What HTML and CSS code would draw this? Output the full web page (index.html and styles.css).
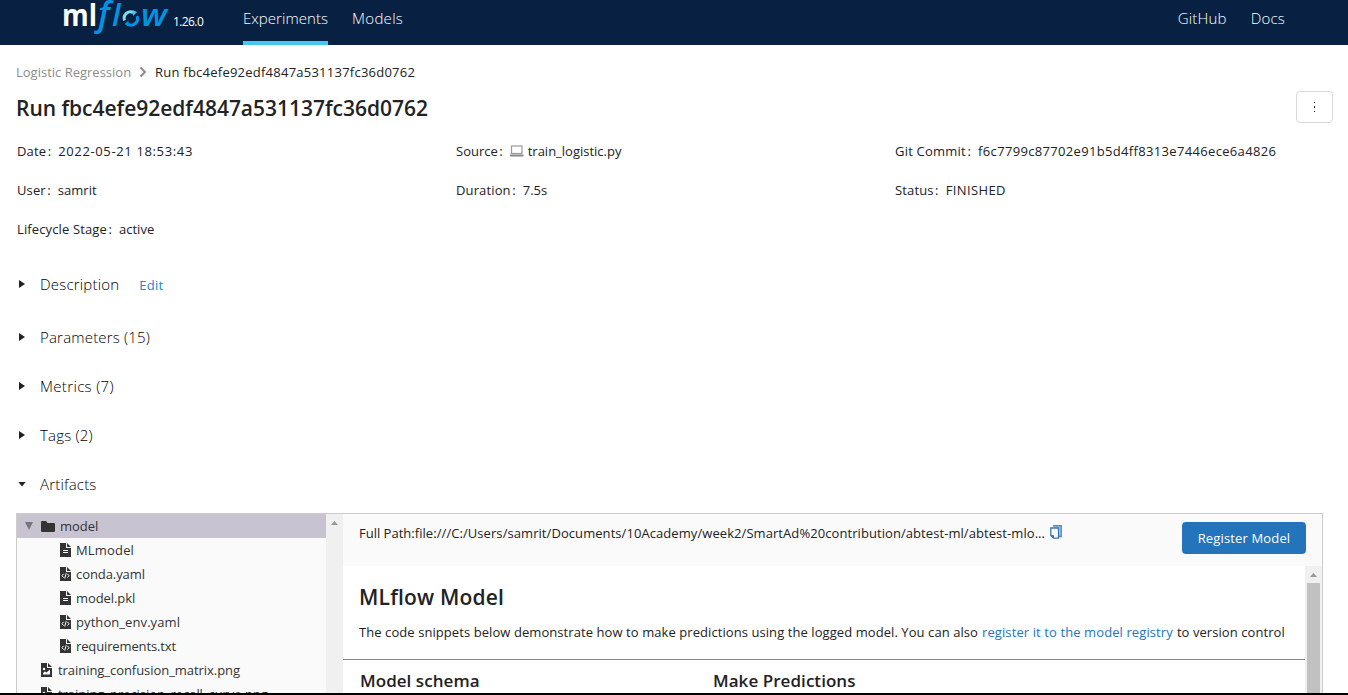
FILE: index.html
```
<!DOCTYPE html>
<html lang="en">
<head>
<meta charset="utf-8">
<title>MLflow</title>
<link rel="stylesheet" href="styles.css">
</head>
<body>
<svg class="sprite" aria-hidden="true">
  <symbol id="doc" viewBox="0 0 11 14"><path d="M0 0H6V5H11V14H0Z M7 0L11 4H7Z" fill="#333"/><path d="M3 7.500H8M3 9.500H8" stroke="#fafafa" stroke-width="1"/></symbol>
  <symbol id="code" viewBox="0 0 11 14"><path d="M0 0H6V5H11V14H0Z M7 0L11 4H7Z" fill="#333"/><path d="M3.500 6.800L2 8.700L3.500 10.500M7.500 6.800L9 8.700L7.500 10.500M6.200 6.200L4.700 11.500" stroke="#fafafa" stroke-width="1" fill="none"/></symbol>
  <symbol id="image" viewBox="0 0 11 14"><path d="M0 0H6V5H11V14H0Z M7 0L11 4H7Z" fill="#333"/><path d="M2 11.500V10L4 8.500L5.500 9.500L9 6.500V11.500Z" fill="#fafafa"/><circle cx="3" cy="6" r="1.200" fill="#fafafa"/></symbol>
</svg>
<header class="navbar">
  <svg class="logo" width="106" height="45" viewBox="0 0 106 45">
    <text class="logo-ml" x="-1" y="26" textLength="35" lengthAdjust="spacingAndGlyphs">ml</text>
    <text class="logo-flow logo-f" x="35" y="26">f</text>
    <text class="logo-flow" x="49" y="26">l</text>
    <g fill="none" stroke-width="3"><path d="M61.500 20.500A6.500 6.500 0 0 1 70.500 12.500" stroke="#7fdcf0"/><path d="M74 16A6.500 6.500 0 0 1 64.500 24" stroke="#0194e2"/></g>
    <path d="M69.500 10L74 12L70 16Z" fill="#43c9ed"/><path d="M65.500 20.500V26.500L61.500 24Z" fill="#0194e2"/>
    <text class="logo-flow" x="78" y="26" textLength="26" lengthAdjust="spacingAndGlyphs">w</text>
  </svg>
  <span class="version">1.26.0</span>
  <nav class="links">
    <a class="active">Experiments</a>
    <a class="models">Models</a>
  </nav>
  <nav class="links right"><a>GitHub</a><a>Docs</a></nav>
</header>
<main>
  <div class="crumbs"><span class="crumb-link">Logistic Regression</span><svg width="8" height="12" viewBox="0 0 8 12"><path d="M1.500 1.500L6 6L1.500 10.500" fill="none" stroke="#8c8c8c" stroke-width="2"/></svg><span class="crumb-now">Run fbc4efe92edf4847a531137fc36d0762</span></div>
  <div class="title-row"><h1>Run fbc4efe92edf4847a531137fc36d0762</h1><button class="more" aria-label="More"><i></i><i></i><i></i></button></div>
  <div class="meta">
    <div><span class="k">Date<em>:</em></span><span class="date">2022-05-21 18:53:43</span></div>
    <div><span class="k source">Source<em>:</em></span><svg class="laptop" width="14" height="12" viewBox="0 0 14 12"><rect x="1.500" y="1" width="10.500" height="7.500" fill="#fff" stroke="#999" stroke-width="1.200"/><path d="M0 9.500H13.500V11.500H0Z" fill="#888"/></svg><span>train_logistic.py</span></div>
    <div><span class="k commit">Git Commit<em>:</em></span><span class="hash">f6c7799c87702e91b5d4ff8313e7446ece6a4826</span></div>
    <div><span class="k">User<em>:</em></span><span>samrit</span></div>
    <div><span class="k">Duration<em>:</em></span><span>7.5s</span></div>
    <div><span class="k">Status<em>:</em></span><span class="status">FINISHED</span></div>
    <div><span class="k">Lifecycle Stage<em>:</em></span><span>active</span></div>
  </div>
  <section class="fold description"><b class="caret"></b><span>Description</span><a class="edit">Edit</a></section>
  <section class="fold"><b class="caret"></b><span>Parameters (15)</span></section>
  <section class="fold metrics"><b class="caret"></b><span>Metrics (7)</span></section>
  <section class="fold"><b class="caret"></b><span>Tags (2)</span></section>
  <section class="fold"><b class="caret open"></b><span>Artifacts</span></section>
  <div class="artifacts">
    <div class="tree">
      <div class="row selected"><b class="toggle"></b><svg width="14" height="11" viewBox="0 0 14 11"><path d="M0 1Q0 0 1 0H5L6.500 2H13Q14 2 14 3V10Q14 11 13 11H1Q0 11 0 10Z" fill="#333"/></svg><span>model</span></div>
      <div class="row child"><svg width="11" height="14"><use href="#doc"/></svg><span class="mlmodel">MLmodel</span></div>
      <div class="row child"><svg width="11" height="14"><use href="#code"/></svg><span>conda.yaml</span></div>
      <div class="row child"><svg width="11" height="14"><use href="#doc"/></svg><span>model.pkl</span></div>
      <div class="row child"><svg width="11" height="14"><use href="#code"/></svg><span class="env">python_env.yaml</span></div>
      <div class="row child"><svg width="11" height="14"><use href="#code"/></svg><span class="reqs">requirements.txt</span></div>
      <div class="row file"><svg width="11" height="14"><use href="#image"/></svg><span>training_confusion_matrix.png</span></div>
      <div class="row file"><svg width="11" height="14"><use href="#image"/></svg><span>training_precision_recall_curve.png</span></div>
    </div>
    <div class="bar"><b class="up"></b></div>
    <div class="view">
      <div class="path-row"><div class="path"><span>Full Path:</span><span class="uri">file:///C:/Users/samrit/Documents/10Academy/week2/SmartAd%20contribution/abtest-ml/abtest-mlo...</span></div><svg class="copy" width="12" height="14" viewBox="0 0 12 14"><path d="M3 .8H11.200V11.500H9" fill="#a9c9e8" stroke="#4a90cc" stroke-width="1.400"/><path d="M.8 3H8.500V13.200H3.500L.8 10.500Z" fill="#fff" stroke="#3577ae" stroke-width="1.300"/><path d="M1 10.500H3.500V13" fill="#3577ae" stroke="#3577ae"/></svg><button class="register">Register Model</button></div>
      <div class="body">
        <div class="content">
          <h2>MLflow Model</h2>
          <p><span>The code snippets below demonstrate how to make predictions using the logged model. You can also</span><a>register it to the model registry</a><span>to version control</span></p>
          <div class="cols"><h3>Model schema</h3><h3>Make Predictions</h3></div>
        </div>
        <div class="bar"><b class="up"></b><i class="thumb"></i></div>
      </div>
    </div>
  </div>
</main>
<footer class="edge"></footer>
</body>
</html>
```
FILE: styles.css
```
* { box-sizing: border-box; }
body { margin: 0; height: 695px; overflow: hidden; display: flex; flex-direction: column; background: #fff; color: #222; font: 13px/20px "Open Sans", "Noto Sans", sans-serif; white-space: nowrap; }
.sprite { display: none; }
.navbar { height: 45px; flex: none; background: #082142; color: #fff; display: flex; align-items: flex-start; padding: 0 63px; }
.logo { flex: none; }
.logo-ml { font: 700 31px "Open Sans", sans-serif; fill: #fff; }
.logo-flow { font: italic 600 31px "Open Sans", sans-serif; fill: #0194e2; }
.logo-f { font-size: 34px; }
.version { margin: 12px 0 0 4px; width: 70px; font-size: 12px; letter-spacing: -.6px; }
.links { display: flex; gap: 24px; font-size: 15px; font-weight: 300; letter-spacing: .05px; }
.models { letter-spacing: .3px; }
.links a { height: 45px; padding-top: 8px; }
.links .active { border-bottom: 4px solid #43c9ed; }
.links.right { margin-left: auto; letter-spacing: .2px; }
main { flex: 1; min-height: 0; padding: 17px 16px 0; display: flex; flex-direction: column; }
.crumbs { display: flex; align-items: center; height: 20px; flex: none; gap: 8px; }
.crumb-link { color: #8c8c8c; width: 115px; }
.crumb-now { letter-spacing: .239px; }
.title-row { display: flex; justify-content: space-between; height: 32px; flex: none; margin: 9px -1px 0 0; }
h1 { margin: 0; font-size: 21px; line-height: 34px; font-weight: 600; letter-spacing: -.02px; }
.more { width: 37px; height: 32px; border: 1px solid #d9d9d9; border-radius: 4px; background: #fff; padding: 0; display: flex; flex-direction: column; align-items: center; justify-content: center; gap: 3px; }
.more i { width: 1px; height: 1.5px; background: #222; }
.meta { display: grid; grid-template-columns: 439px 439px 1fr; grid-auto-rows: 39px; margin-top: 18px; padding-left: 1px; flex: none; }
.meta div { display: flex; height: 20px; align-items: center; }
.k { margin-right: 7px; letter-spacing: .13px; }
.k em { margin-left: 1.5px; font-style: normal; }
.source { letter-spacing: 0; }
.commit { letter-spacing: .22px; }
.date { letter-spacing: .64px; }
.hash { letter-spacing: .333px; }
.status { letter-spacing: .381px; }
.laptop { margin-right: 4px; }
.fold { height: 20px; margin-bottom: 29px; flex: none; display: flex; align-items: center; font-size: 15px; font-weight: 300; letter-spacing: .19px; color: #000; }
.metrics { letter-spacing: .34px; }
.description { margin: 16px 0 33px; }
.caret { width: 6px; height: 8px; margin: 0 15px 0 3px; background: #222; clip-path: polygon(0 0, 100% 50%, 0 100%); }
.caret.open { width: 8px; height: 5px; margin: 0 14px 0 2px; clip-path: polygon(0 0, 100% 0, 50% 100%); }
.edit { margin: 2px 0 0 20px; font-size: 13px; font-weight: 400; letter-spacing: .25px; color: #2284d8; }
.artifacts { flex: 1; min-height: 0; margin: -10px 9px 0 0; border: 1px solid #ccc; border-bottom: 0; display: flex; overflow: hidden; }
.tree { width: 309px; background: #fafafa; overflow: hidden; color: #333; }
.row { height: 24px; display: flex; align-items: center; }
.selected { background: #c8c3d1; padding-left: 8px; }
.toggle { width: 8px; height: 8px; background: #777; clip-path: polygon(0 0, 100% 0, 50% 100%); margin-right: 8px; }
.selected span { margin-left: 5px; }
.child { padding-left: 43px; gap: 5px; letter-spacing: -.08px; }
.mlmodel { letter-spacing: .17px; }
.env { letter-spacing: .08px; }
.reqs { letter-spacing: -.13px; }
.file { padding-left: 24px; gap: 6px; letter-spacing: -.05px; }
.bar { width: 17px; flex: none; background: #f0f0f0; display: flex; flex-direction: column; align-items: center; }
.up { width: 7px; height: 4px; margin-top: 7px; background: #999; clip-path: polygon(50% 0, 100% 100%, 0 100%); }
.view { flex: 1; min-width: 0; display: flex; flex-direction: column; }
.path-row { height: 52px; flex: none; background: #fafafa; display: flex; align-items: flex-start; padding: 8px 16px; }
.path { padding-top: 1px; display: flex; }
.uri { letter-spacing: .07px; }
.copy { margin: 3px 0 0 5px; }
.register { margin-left: auto; width: 124px; height: 32px; border: 0; border-radius: 4px; padding: 0; background: #2374bb; color: #fff; font: inherit; letter-spacing: .15px; }
.body { flex: 1; display: flex; min-height: 0; }
.content { flex: 1; overflow: hidden; }
h2 { margin: 18px 16px 0; font-size: 21px; line-height: 26px; font-weight: 600; letter-spacing: .19px; }
p { margin: 12px 16px 17px; display: flex; gap: 4px; letter-spacing: .073px; }
p a { color: #2374bb; letter-spacing: .1px; }
.cols { border-top: 1px solid #888; display: grid; grid-template-columns: 353px 1fr; padding: 9px 17px; }
h3 { margin: 0; font-size: 17px; line-height: 24px; font-weight: 600; letter-spacing: .05px; }
.thumb { width: 13px; flex: 1; margin-top: 6px; background: #c1c1c1; }
.edge { height: 2px; flex: none; background: #000; }
```
